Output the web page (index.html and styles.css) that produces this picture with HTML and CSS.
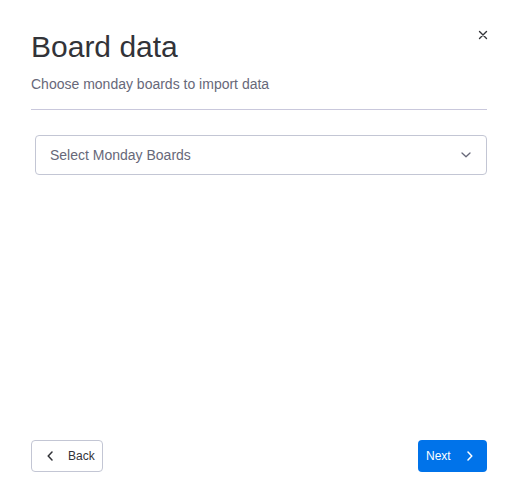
FILE: index.html
```html
<!DOCTYPE html>
<html>
<head>
<meta charset="utf-8">
<link rel="stylesheet" href="styles.css">
</head>
<body>
<div class="modal">
  <div class="header">
    <h1 class="title">Board data</h1>
    <button class="close" aria-label="Close">
      <svg width="16" height="16" viewBox="0 0 16 16"><path d="M4.5 4.5L11.5 11.5M11.5 4.5L4.5 11.5" stroke="#323338" stroke-width="1.4" stroke-linecap="round" fill="none"/></svg>
    </button>
  </div>
  <p class="subtitle">Choose monday boards to import data</p>
  <div class="divider"></div>
  <div class="select">
    <span class="placeholder">Select Monday Boards</span>
    <svg class="chev-down" width="10" height="6" viewBox="0 0 10 6"><path d="M1 1L5 4.8L9 1" stroke="#676879" stroke-width="1.3" fill="none" stroke-linecap="round" stroke-linejoin="round"/></svg>
  </div>
  <div class="footer">
    <button class="btn btn-back">
      <svg width="6" height="10" viewBox="0 0 6 10"><path d="M5 1L1.2 5L5 9" stroke="#323338" stroke-width="1.5" fill="none" stroke-linecap="round" stroke-linejoin="round"/></svg>
      <span>Back</span>
    </button>
    <button class="btn btn-next">
      <span>Next</span>
      <svg width="6" height="10" viewBox="0 0 6 10"><path d="M1 1L4.8 5L1 9" stroke="#ffffff" stroke-width="1.5" fill="none" stroke-linecap="round" stroke-linejoin="round"/></svg>
    </button>
  </div>
</div>
</body>
</html>
```
FILE: styles.css
```css
* { box-sizing: border-box; }
html, body {
  margin: 0;
  padding: 0;
  background: #ffffff;
  font-family: "Liberation Sans", Arial, sans-serif;
  color: #323338;
}
.modal {
  height: 502px;
  padding: 29px 31px 30px 31px;
  display: flex;
  flex-direction: column;
}
.header {
  display: flex;
  justify-content: space-between;
  align-items: flex-start;
}
.title {
  margin: 0;
  font-size: 30px;
  line-height: 36px;
  font-weight: 400;
  color: #323338;
}
.close {
  border: 0;
  background: none;
  padding: 0;
  margin: -2px -4px 0 0;
  width: 16px;
  height: 16px;
  display: flex;
  cursor: pointer;
}
.subtitle {
  margin: 9px 0 0 0;
  font-size: 14px;
  line-height: 20px;
  color: #676879;
}
.divider {
  margin-top: 15px;
  height: 1px;
  background: #c9c8dc;
}
.select {
  margin: 25px 0 0 4px;
  height: 40px;
  border: 1px solid #c3c6d4;
  border-radius: 4px;
  display: flex;
  align-items: center;
  justify-content: space-between;
  padding: 0 15px 0 14px;
}
.placeholder {
  font-size: 14px;
  color: #676879;
}
.chev-down { display: block; margin-top: 0; }
.footer {
  margin-top: auto;
  display: flex;
  justify-content: space-between;
  align-items: center;
}
.btn {
  height: 32px;
  border-radius: 4px;
  font-family: "Liberation Sans", Arial, sans-serif;
  font-size: 12px;
  display: flex;
  align-items: center;
  cursor: pointer;
}
.btn svg { display: block; }
.btn-back {
  width: 72px;
  background: #ffffff;
  border: 1px solid #c3c6d4;
  color: #323338;
  padding: 0 0 0 15px;
  gap: 15px;
}
.btn-next {
  width: 69px;
  background: #0073ea;
  border: 0;
  color: #ffffff;
  padding: 0 0 0 8px;
  gap: 16px;
}
```
